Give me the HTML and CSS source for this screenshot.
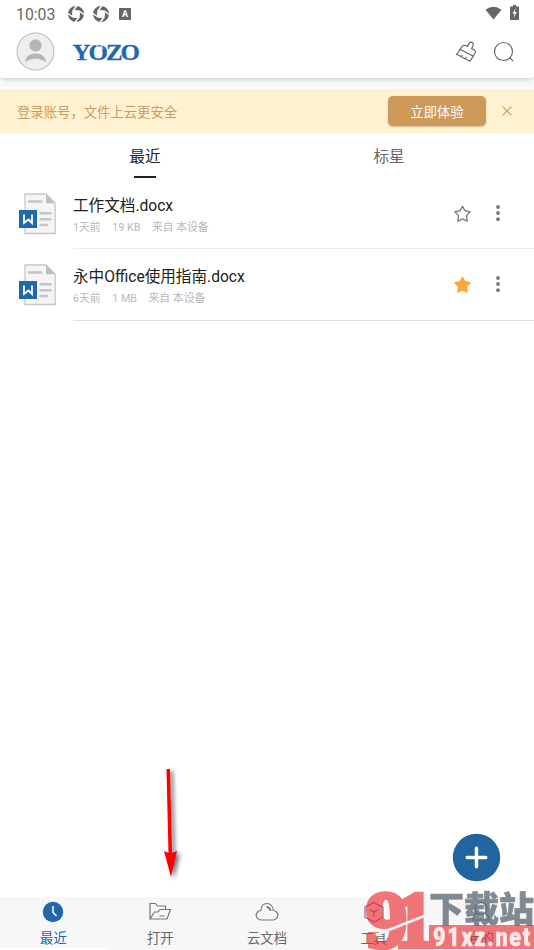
FILE: index.html
```html
<!DOCTYPE html>
<html lang="zh-CN">
<head>
<meta charset="utf-8">
<title>YOZO</title>
<link rel="stylesheet" href="styles.css">
</head>
<body>
<svg class="defs" width="0" height="0">
  <defs>
    <g id="ring">
      <circle cx="8" cy="8" r="6" fill="none" stroke="#666" stroke-width="4"/>
      <path d="M9 -.5 4.500 5.500M16 8.500 10.500 4.500M7 16.500l4.500-6M0 7.500l5.500 4" stroke="#fff" stroke-width="1.500"/>
    </g>
    <g id="doc">
      <path d="M6 1H27l9.200 9.200V40.500H6z" fill="#f5f5f6" stroke="#c8c8cc" stroke-width="1.300"/>
      <path d="M27 1v9.200h9.200z" fill="#bebec3"/>
      <path d="M10 8.500h12.500M21.500 20.200h10M21.500 26.200h10M21.500 32h6.500" stroke="#c4c4c9" stroke-width="2.400" stroke-linecap="round"/>
      <rect x="0" y="17" width="18" height="18" fill="#2068ad"/>
      <path d="M5 21.500V30l4.500-3.500L13 30v-8.500" fill="none" stroke="#fff" stroke-width="1.800"/>
    </g>
    <path id="star" d="M8 1.200 10.200 5.300 15.200 6.400 11.800 10 12.400 15.200 8 13 3.600 15.200 4.200 10 .8 6.400 5.800 5.300z" stroke-linejoin="round"/>
    <g id="dots"><circle cx="2" cy="2" r="1.900"/><circle cx="2" cy="8" r="1.900"/><circle cx="2" cy="14.200" r="1.900"/></g>
  </defs>
</svg>
<header class="header">
  <div class="status">
    <span class="clock">10:03</span>
    <svg class="ring" viewBox="0 0 16 16"><use href="#ring"/></svg>
    <svg class="ring second" viewBox="0 0 16 16"><use href="#ring"/></svg>
    <span class="input-mode">A</span>
    <svg class="wifi" viewBox="0 0 18 14"><path d="M.5 3.500Q9-3 17.500 3.500L9 14z" fill="#666"/></svg>
    <svg class="battery" viewBox="0 0 9 15"><path d="M3 0h3v1.500h3V15H0V1.500h3z" fill="#666"/><path d="M5.800 3 2.500 8.500h2L3.600 13l3.200-6H4.700z" fill="#fff"/></svg>
  </div>
  <div class="brand-row">
    <svg class="avatar" viewBox="0 0 38 38"><circle cx="19" cy="19" r="18" fill="#eee" stroke="#b9b9b9"/><circle cx="19" cy="13" r="6" fill="#b5b5b5"/><path d="M8.500 29.500Q10 21 19 21t10.500 8.500q-5-3.500-10.500-3.500T8.500 29.500z" fill="#b5b5b5"/></svg>
    <svg class="logo" viewBox="0 0 68 28"><text transform="translate(.5 22) scale(1.040 1)" x="0" y="0">YOZO</text><path d="m24 8 7-3M27 10l5-3M28 5l3 6" stroke="#fff" stroke-width=".8"/></svg>
    <svg class="brush" viewBox="0 0 22 22"><path d="M5 8.300 7.700 4.700q2-1 4.600.6L14.300 2q1.800-1.600 3.600 0 .8 1 0 2.700l-1.300 2.800 3 1.600q1.500 1.200.7 2.400L18.300 15M5 8.300 18.300 15.200 14.900 20.300 1.500 13.200q2.500-2 3.500-4.900M10.500 17.500l1-1.500M6.500 15.500l1-1.500"/></svg>
    <svg class="search" viewBox="0 0 22 22"><circle cx="10.500" cy="10.500" r="9"/><path d="m16.500 16.500 3.600 3.600"/></svg>
  </div>
</header>
<section class="banner">
  <span class="banner-text">登录账号，文件上云更安全</span>
  <button class="try">立即体验</button>
  <svg class="close" viewBox="0 0 10 10"><path d="m.7.7 8.600 8.600m0-8.600L.7 9.300"/></svg>
</section>
<nav class="tabs"><span class="tab active">最近</span><span class="tab">标星</span></nav>
<main class="files">
  <article class="file">
    <svg class="doc" viewBox="0 0 38 42"><use href="#doc"/></svg>
    <div class="file-body">
      <div class="info"><h2>工作文档.docx</h2><p><span>1天前</span><span>19 KB</span><span>来自 本设备</span></p></div>
      <svg class="star" viewBox="0 0 16 16"><use href="#star"/></svg>
      <svg class="dots" viewBox="0 0 4 16"><use href="#dots"/></svg>
    </div>
  </article>
  <article class="file last">
    <svg class="doc" viewBox="0 0 38 42"><use href="#doc"/></svg>
    <div class="file-body">
      <div class="info"><h2>永中Office使用指南.docx</h2><p><span>6天前</span><span>1 MB</span><span>来自 本设备</span></p></div>
      <svg class="star starred" viewBox="0 0 16 16"><use href="#star"/></svg>
      <svg class="dots" viewBox="0 0 4 16"><use href="#dots"/></svg>
    </div>
  </article>
</main>
<svg class="watermark" viewBox="0 0 172 61">
  <g class="mark-red"><text class="mark" transform="translate(4 58) scale(1.030 1)" x="0 27" y="0">91</text><rect x="67" y="36" width="105" height="24"/></g>
  <path d="M14 46 65 26" stroke="#f7f7f7" stroke-width="2.500"/>
  <text class="site" x="67" y="33" textLength="105" lengthAdjust="spacingAndGlyphs">下载站</text>
  <text class="domain" transform="translate(71 57) scale(.86 1)" x="0" y="0" textLength="113">91xz.net</text>
</svg>
<footer class="bottom">
  <a class="item current"><svg viewBox="0 0 24 22"><circle cx="12" cy="11" r="10.200" fill="#2068ad"/><path d="M12 5v6.500l3.500 3.500" stroke="#fff" stroke-width="1.500"/></svg><span>最近</span></a>
  <a class="item"><svg viewBox="0 0 24 22"><path d="M2 18V2.500h5.500l2 2.500h8v3M2 18l4.500-7H10l2-2.500h10.500L19 18zM11.500 15h5"/></svg><span>打开</span></a>
  <a class="item"><svg viewBox="0 0 24 22"><path d="M6 19a4.500 4.500 0 0 1-.2-9.500Q6.500 2.500 12 2.500t6.200 7A4.500 4.500 0 0 1 18 19zM11 5.500q4 0 5 4.500M12 6.500q2.500.5 3 3"/></svg><span>云文档</span></a>
  <a class="item"><svg viewBox="0 0 24 22"><path d="m12 1.500 9 4.700v10L12 21l-9-4.800v-10zM7.500 8.500 12 11l4.500-2.500M12 11v5"/></svg><span>工具</span></a>
  <a class="item"><svg viewBox="0 0 24 22"><circle cx="12" cy="7.500" r="6"/><path d="M8 12q-4 2-4 7h16q0-5-4-7"/></svg><span>我的</span></a>
</footer>
<svg class="add" viewBox="0 0 50 50"><circle cx="25" cy="25" r="24.200" fill="#2065a0"/><path d="M25 15.500v19M15.500 25h19" stroke="#fff" stroke-width="3.500" stroke-linecap="round"/></svg>
<svg class="arrow" viewBox="0 0 40 120"><path d="M18.500 5h3.500l2 84 5-2-6 26-7-26 4.500 2z" fill="red"/></svg>
</body>
</html>
```
FILE: styles.css
```css
* { box-sizing: border-box; }
body {
  margin: 0; width: 534px; height: 950px; overflow: hidden; position: relative;
  display: flex; flex-direction: column; background: #fff; color: #222;
  font-family: Roboto, "Noto Sans CJK SC", sans-serif;
}
svg { display: block; fill: none; flex: none; overflow: visible; }
.defs { position: absolute; }
.header { height: 78px; border-radius: 0 0 3px 3px; box-shadow: 0 1px 7px rgba(0,0,0,.25); flex: none; position: relative; background: #fff; z-index: 1; }
.status { height: 28px; display: flex; align-items: center; padding: 0 15px 0 16px; }
.clock { width: 52px; font-size: 15.800px; color: #666; }
.ring { width: 16px; height: 16px; }
.second { margin-left: 9px; }
.input-mode { width: 12px; height: 12px; margin-left: 10px; background: #666; color: #fff; font: bold 9px/12px Roboto, sans-serif; text-align: center; border-radius: 1px; }
.wifi { width: 17px; height: 14px; margin-left: auto; margin-bottom: 2px; }
.battery { width: 9px; height: 15px; margin: 0 0 3px 8px; }
.brand-row { height: 48px; display: flex; align-items: center; padding: 0 19px 0 16px; }
.avatar { width: 39px; height: 39px; margin-top: -1px; }
.logo { width: 68px; height: 28px; margin-left: 17px; }
.logo text { font: bold 24px "Liberation Serif", serif; letter-spacing: -1.900px; fill: #2068ad; stroke: #2068ad; stroke-width: .3; }
.brush, .search { width: 22px; height: 22px; stroke: #666; stroke-width: 1.200; }
.brush { margin-left: auto; }
.search { margin-left: 16px; }
.banner { height: 44px; margin-top: 11px; flex: none; display: flex; align-items: center; padding: 0 22px 0 17px; background: #fff2d3; box-shadow: 0 -6px 0 #fafafa; }
.banner-text { font-size: 13.35px; color: #cb9c61; }
.try { margin-left: auto; width: 98px; height: 30px; border: 0; padding: 0; border-radius: 5px; background: #cd9959; color: #fff; font: 13.35px Roboto, "Noto Sans CJK SC", sans-serif; box-shadow: 0 1px 2px rgba(110,80,30,.35); }
.close { width: 10px; height: 10px; margin-left: 16px; stroke: #cd9959; stroke-width: 1.200; }
.tabs { height: 45px; display: flex; padding: 0 23px; flex: none; }
.tab { width: 50%; height: 45px; position: relative; text-align: center; font-size: 15.500px; line-height: 48px; color: #666; }
.active { color: #222; }
.active::after { content: ""; position: absolute; left: calc(50% - 11px); bottom: 0; width: 22px; height: 2px; background: #222; }
.files { flex: 1; }
.file { height: 71px; display: flex; padding-left: 18.500px; }
.doc { width: 38px; height: 42px; margin: 15px 16.500px 0 0; }
.file-body { flex: 1; display: flex; align-items: flex-start; padding-right: 33px; border-bottom: 1px solid #ececec; }
.last { height: 72px; }
.last .file-body { border-color: #dedede; }
.info { flex: 1; padding-top: 16px; }
.info h2 { margin: 0; font-size: 15.600px; font-weight: 400; line-height: 24px; }
.info p { margin: 1px 0 0; display: flex; gap: 11.500px; font-size: 10.800px; line-height: 18px; color: #b9b9b9; }
.star { width: 17px; height: 17px; margin-top: 27px; stroke: #777; stroke-width: 1.200; }
.starred { fill: #ffa638; stroke: #ffa638; }
.dots { width: 4px; height: 16px; margin: 27px 1px 0 25px; fill: #777; }
.bottom { height: 53px; flex: none; display: flex; background: #f7f7f7; }
.item { flex: 1; display: flex; flex-direction: column; align-items: center; padding-top: 4px; color: #666; font-size: 13.300px; }
.item svg { width: 24px; height: 22px; stroke: #777; stroke-width: 1.200; }
.item span { line-height: 20px; margin-top: 6px; }
.current { color: #2068ad; border-bottom: 2px solid #fff; }
.current svg { stroke: none; }
.add { position: absolute; left: 452px; top: 833px; width: 49px; height: 49px; }
.arrow { position: absolute; left: 148px; top: 764px; width: 40px; height: 120px; filter: drop-shadow(3px 2px 2px rgba(0,0,0,.55)); }
.watermark { position: absolute; z-index: 2; left: 362px; top: 889px; width: 172px; height: 61px; pointer-events: none; }
.mark-red { fill: #ec2b30; opacity: .64; }
.mark { font: bold 80px "Liberation Serif", serif; stroke: #ec2b30; stroke-width: 4.500; }
.site { font: 900 35px "Noto Sans CJK SC", sans-serif; fill: #566570; stroke: #566570; stroke-width: .6; opacity: .75; }
.domain { font: 900 25px Roboto, sans-serif; fill: #fff; stroke: #fff; stroke-width: .5; opacity: .85; }
```
